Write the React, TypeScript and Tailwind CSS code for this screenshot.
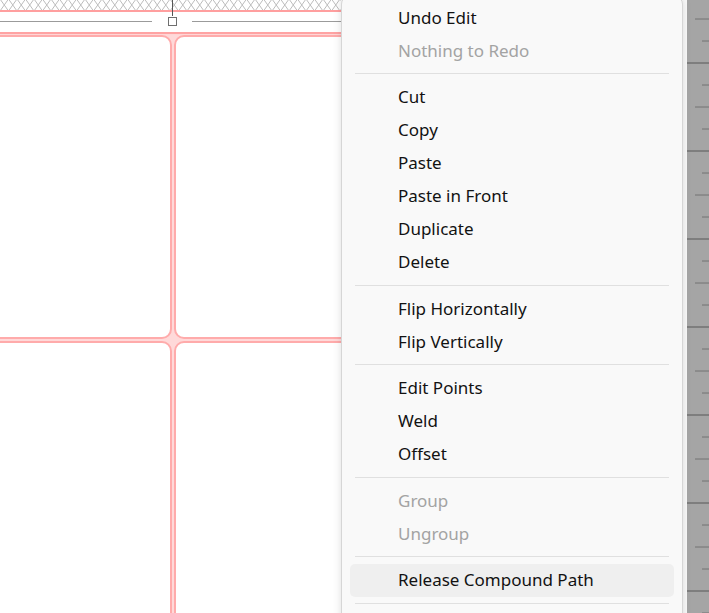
import React from "react";

type Item = { label: string; disabled?: boolean; active?: boolean };

const groups: Item[][] = [
  [{ label: "Undo Edit" }, { label: "Nothing to Redo", disabled: true }],
  [
    { label: "Cut" },
    { label: "Copy" },
    { label: "Paste" },
    { label: "Paste in Front" },
    { label: "Duplicate" },
    { label: "Delete" },
  ],
  [{ label: "Flip Horizontally" }, { label: "Flip Vertically" }],
  [{ label: "Edit Points" }, { label: "Weld" }, { label: "Offset" }],
  [{ label: "Group", disabled: true }, { label: "Ungroup", disabled: true }],
  [{ label: "Release Compound Path", active: true }],
];

function Hatch() {
  return (
    <svg width="341" height="10" className="block shrink-0">
      <defs>
        <pattern id="hatch" width="17" height="12" y="-1" patternUnits="userSpaceOnUse">
          <path d="M0 12 L8.5 0 L17 12 M0 0 L8.5 12 L17 0" stroke="#bcbcbc" strokeWidth="1" fill="none" />
        </pattern>
      </defs>
      <rect width="341" height="10" fill="url(#hatch)" />
    </svg>
  );
}

function Ruler() {
  const majors = [-25, 63, 151, 239, 327, 415, 503, 591];
  return (
    <svg width="22" height="613" className="block shrink-0">
      <rect width="22" height="613" fill="#a5a5a5" />
      {majors.map((y) => (
        <g key={y} stroke="#727272" strokeWidth="1.5">
          <line x1="0" x2="22" y1={y} y2={y} />
          <line x1="15" x2="22" y1={y + 22} y2={y + 22} strokeWidth="1" />
          <line x1="8" x2="22" y1={y + 44} y2={y + 44} strokeWidth="1" />
          <line x1="15" x2="22" y1={y + 66} y2={y + 66} strokeWidth="1" />
        </g>
      ))}
    </svg>
  );
}

function Cell() {
  return <div className="bg-white border-2 border-[#ffabab] rounded-[10px]" />;
}

function Separator() {
  return (
    <div className="h-[13.5px] flex items-center px-[13px]">
      <div className="h-px flex-1 bg-[#e0e0e0]" />
    </div>
  );
}

export default function App() {
  return (
    <div
      className="w-[709px] h-[613px] overflow-hidden flex bg-white"
      style={{ fontFamily: '"Noto Sans", "Open Sans", sans-serif' }}
    >
      {/* canvas */}
      <div className="relative flex-1 bg-[#fafafa]">
        <div className="w-[341px] h-full flex flex-col bg-white overflow-hidden">
          <Hatch />
          <div className="shrink-0 h-[1.5px] bg-[#ff9f9f]" />
          <div className="shrink-0 h-[5px]" />
          <div className="shrink-0 flex items-center h-[10px]">
            <div className="w-[152px] h-[1.5px] bg-[#9b9b9b]" />
            <div className="w-[16px]" />
            <div className="w-[9px] h-[9px] border-[1.5px] border-[#6f6f6f] bg-white" />
            <div className="w-[15px]" />
            <div className="flex-1 h-[1.5px] bg-[#9b9b9b]" />
          </div>
          <div className="shrink-0 h-[5.5px]" />
          <div className="shrink-0 h-[2.5px] bg-[#ffa3a3] border-b border-[#ffd6d6]" />
          <div className="shrink-0 -ml-[30px] grid grid-cols-[202px_200px] grid-rows-[304px_304px] gap-[2px] bg-[#ffd9d9]">
            <Cell />
            <Cell />
            <Cell />
            <Cell />
          </div>
        </div>
        <div className="absolute left-[172px] top-0 w-px h-[16px] bg-[#555]" />

        {/* context menu */}
        <div className="absolute left-[341px] top-[-4px] w-[342px] h-[640px] pt-[4px] bg-[#f9f9f9] border border-[#d6d6d6] rounded-[8px] shadow-[0_0_8px_rgba(0,0,0,0.13)]">
          {groups.map((g, gi) => (
            <div key={gi}>
              {gi > 0 && <Separator />}
              {g.map((it) => (
                <div
                  key={it.label}
                  className={`h-[33px] mx-[8px] pl-[48px] flex items-center rounded-[5px] text-[17px] ${
                    it.active ? "bg-[#efefef]" : ""
                  } ${it.disabled ? "text-[#a3a3a3]" : "text-[#121212]"}`}
                >
                  {it.label}
                </div>
              ))}
            </div>
          ))}
          <Separator />
        </div>
      </div>
      <Ruler />
    </div>
  );
}
